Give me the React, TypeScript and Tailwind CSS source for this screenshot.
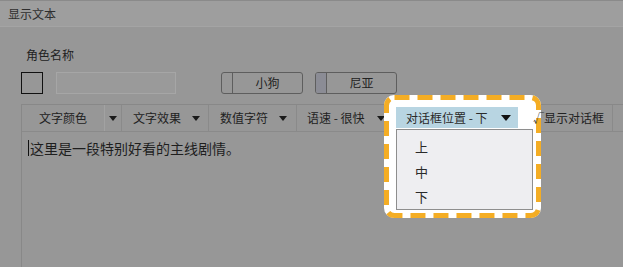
import React from "react";

const Arrow = ({ big = false }: { big?: boolean }) => (
  <svg width={big ? 10 : 8} height={big ? 6 : 5} viewBox={big ? "0 0 10 6" : "0 0 8 5"} className="shrink-0">
    {big ? <polygon points="0,0 10,0 5,6" fill="#111" /> : <polygon points="0,0 8,0 4,5" fill="#1a1a1a" />}
  </svg>
);

export default function App() {
  return (
    <div
      className="relative w-[623px] h-[267px] overflow-hidden bg-[#979797] flex flex-col text-[#222]"
      style={{ fontFamily: '"Noto Sans CJK SC", "Noto Sans", sans-serif' }}
    >
      {/* title bar */}
      <div className="h-[27px] shrink-0 border-t border-b border-t-[#8a8a8a] border-b-[#a4a4a4] bg-[#9e9e9e] flex items-center pl-[8px] text-[12px] text-[#2e2e2e]">
        显示文本
      </div>

      {/* label */}
      <div className="mt-[19px] pl-[26px] text-[12px] leading-[18px] text-[#222]">角色名称</div>

      {/* row */}
      <div className="mt-[8px] h-[22px] flex items-stretch pl-[21px]">
        <div className="w-[22px] border border-[#111]" />
        <div className="ml-[13px] w-[120px] border border-[#a6a6a6] bg-[#9a9a9a]" />
        <div className="ml-[45px] w-[82px] flex border border-[#5e5e5e] rounded-[3px] overflow-hidden">
          <div className="w-[11px] border-r border-[#5e5e5e]" />
          <div className="flex-1 flex items-center justify-center text-[12px] text-[#222]">小狗</div>
        </div>
        <div className="ml-[12px] w-[82px] flex border border-[#5e5e5e] rounded-[3px] overflow-hidden">
          <div className="w-[11px] border-r border-[#5e5e5e] bg-[#8b8c95]" />
          <div className="flex-1 flex items-center justify-center text-[12px] text-[#222]">尼亚</div>
        </div>
      </div>

      {/* editor box */}
      <div className="mt-[10px] ml-[21px] flex-1 border-l border-t border-[#888] flex flex-col">
        {/* toolbar */}
        <div className="h-[27px] shrink-0 border-b border-[#8a8a8a] flex items-stretch text-[12px] text-[#222]">
          <div className="w-[83px] flex items-center justify-center border-r border-[#a2a2a2]">文字颜色</div>
          <div className="w-[17px] flex items-center justify-center border-r border-[#8a8a8a]">
            <Arrow />
          </div>
          <div className="w-[87px] flex items-center pl-[11px] pr-[8px] border-r border-[#8a8a8a]">
            <span>文字效果</span>
            <span className="ml-auto flex"><Arrow /></span>
          </div>
          <div className="w-[88px] flex items-center pl-[11px] pr-[9px] border-r border-[#8a8a8a]">
            <span>数值字符</span>
            <span className="ml-auto flex"><Arrow /></span>
          </div>
          <div className="w-[94px] flex items-center pl-[10px] pr-[6px]">
            <span>语速 - 很快</span>
            <span className="ml-auto flex"><Arrow /></span>
          </div>
          <div className="w-[5px]" />
          <div className="relative z-20 w-[122px] mt-[2px] mb-[3px] bg-[#b8d5e2] flex items-center pl-[10px] pr-[7px] text-[#2a2a2a]">
            <span>对话框位置 - 下</span>
            <span className="ml-auto flex"><Arrow big /></span>
            <div className="absolute left-0 top-[22px] w-[137px] h-[81px] bg-[#eeeef1] border border-[#8e8e8e] flex flex-col pl-[18px] pt-[4px] text-[13px] text-[#2a2a2a]">
              <div className="h-[25px] flex items-center">上</div>
              <div className="h-[25px] flex items-center">中</div>
              <div className="h-[25px] flex items-center">下</div>
            </div>
          </div>
          <div className="relative z-20 w-[95px] flex items-center pl-[15px] border-r border-[#8a8a8a]">
            <span className="text-[11px] text-[#333]">√</span>
            <span>显示对话框</span>
          </div>
        </div>
        {/* text */}
        <div className="mt-[6px] pl-[6px] flex items-center h-[20px]">
          <div className="w-px h-[16px] bg-[#111]" />
          <span className="text-[14px] text-[#1e1e1e] ml-px">这里是一段特别好看的主线剧情。</span>
        </div>
      </div>

      {/* spotlight highlight */}
      <div className="absolute left-[384px] top-[95px] w-[157px] h-[123px] z-10 rounded-[10px] bg-white">
        <svg className="absolute inset-0" width="157" height="123" viewBox="0 0 157 123">
          <rect
            x="2.5"
            y="2.5"
            width="152"
            height="118"
            rx="8"
            ry="8"
            fill="none"
            stroke="#f4ad24"
            strokeWidth="5"
            strokeDasharray="15 8"
          />
        </svg>
      </div>
    </div>
  );
}
